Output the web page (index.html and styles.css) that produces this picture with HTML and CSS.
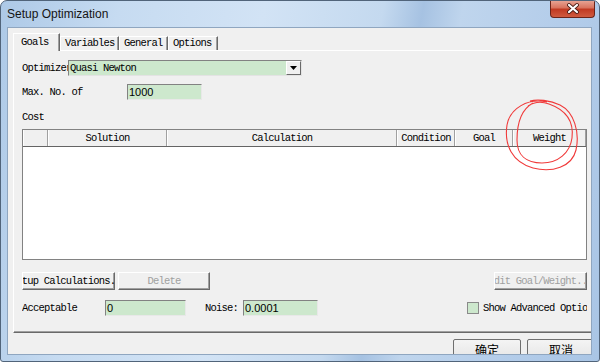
FILE: index.html
```html
<html>
<head>
  <title>Setup Optimization</title>
  <link rel="stylesheet" href="styles.css">
</head>
<body>

<div class="window">
  <div class="titlebar">
    <span class="title">Setup Optimization</span>
    <div class="close">
      <svg width="14" height="11" viewBox="0 0 14 11">
        <path d="M3 2 L11 9 M11 2 L3 9" stroke="#4a1d16" stroke-width="3.8" stroke-linecap="round"/>
        <path d="M3 2 L11 9 M11 2 L3 9" stroke="#ffffff" stroke-width="2.2" stroke-linecap="round"/>
      </svg>
    </div>
  </div>

  <div class="client">
    <div class="tabs">
      <div class="tab active w-goals">Goals</div>
      <div class="tab w-vars">Variables</div>
      <div class="tab w-gen">General</div>
      <div class="tab w-opts">Options</div>
    </div>

    <div class="pane">
      <div class="row row-opt">
        <span class="lbl w-optimizer">Optimizer</span>
        <div class="combo">
          <span class="combo-text">Quasi Newton</span>
          <span class="drop">
            <svg width="7" height="4" viewBox="0 0 7 4"><path d="M0 0 H7 L3.5 4 Z" fill="#000"/></svg>
          </span>
        </div>
      </div>

      <div class="row row-max">
        <span class="lbl w-max">Max. No. of</span>
        <div class="field w-maxval">1000</div>
      </div>

      <div class="row row-cost">
        <span class="lbl">Cost</span>
      </div>

      <div class="grid">
        <div class="grid-head">
          <div class="hcell"></div>
          <div class="hcell">Solution</div>
          <div class="hcell">Calculation</div>
          <div class="hcell">Condition</div>
          <div class="hcell">Goal</div>
          <div class="hcell">Weight</div>
        </div>
        <div class="grid-body"></div>
      </div>

      <div class="row row-btns">
        <div class="btn w-setup">Setup Calculations...</div>
        <div class="btn disabled w-delete">Delete</div>
        <div class="btn disabled w-edit push">Edit Goal/Weight...</div>
      </div>

      <div class="row row-accept">
        <span class="lbl w-accept">Acceptable</span>
        <div class="field w-acceptval">0</div>
        <span class="lbl w-noise">Noise:</span>
        <div class="field w-noiseval">0.0001</div>
        <div class="check push">
          <span class="box"></span>
          <span class="check-text">Show Advanced Options</span>
        </div>
      </div>
    </div>

    <div class="dialog-buttons">
      <div class="dbtn">确定</div>
      <div class="dbtn">取消</div>
    </div>
  </div>

  <svg class="mark" width="85" height="82" viewBox="500 95 85 82">
    <path d="M547 102 C528 98, 510 108, 507 125 C504 145, 512 162, 533 168 C552 173, 572 167, 576 150 C580 132, 574 112, 560 105 C550 100, 537 99, 530 101" fill="none" stroke="#f03a3a" stroke-width="1.1"/>
    <path d="M533 103 C522 109, 517 122, 517 140 C517 155, 526 163, 542 163 C558 163, 570 153, 572 138 C574 122, 566 110, 549 104 C541 101, 534 102, 528 106" fill="none" stroke="#f03a3a" stroke-width="1.1"/>
  </svg>
</div>

</body>
</html>
```

FILE: styles.css
```css
* { box-sizing: border-box; }
html, body { margin: 0; padding: 0; }
body {
  width: 600px; height: 362px; overflow: hidden; background: #fff;
  font-family: "Liberation Mono", "DejaVu Sans Mono", monospace;
  font-size: 10.5px; letter-spacing: -0.8px; color: #000;
}

/* window frame */
.window {
  position: relative; width: 600px; height: 362px;
  border: 1px solid #51647a; border-radius: 7px 7px 3px 3px;
  background: linear-gradient(100deg, #adc9e7 0%, #c6dbf1 18%, #d2e3f5 40%, #c4d9ef 58%, #a6c2e2 64%, #bfd5ed 70%, #b4cdea 85%, #a9c5e5 100%);
  display: flex; flex-direction: column; overflow: hidden;
}
.titlebar { height: 26px; flex: none; display: flex; align-items: flex-start; }
.title {
  font-family: "Liberation Sans", Arial, sans-serif; font-size: 12px; letter-spacing: 0;
  line-height: 14px; margin: 6px 0 0 6px; color: #151515;
}
.close {
  margin: -1px 4px 0 auto; width: 45px; height: 18px;
  border: 1px solid #6b2419; border-top: none; border-radius: 0 0 4px 4px;
  background: linear-gradient(#e9a99a 0%, #d9745f 45%, #c13a22 55%, #cf5a3f 100%);
  display: flex; align-items: center; justify-content: center;
}

.client {
  flex: none; width: 585px; height: 328px; margin-left: 6px;
  border: 1px solid #8fa6c0; background: #f0f0f0; overflow: hidden;
}

/* tabs */
.tabs { height: 22px; margin-left: 5px; display: flex; align-items: flex-end; }
.tab {
  height: 14px; line-height: 13px; padding-left: 4px; white-space: nowrap;
  border-top: 1px solid #fff; border-left: 1px solid #fff; border-right: 1px solid #696969;
  box-shadow: inset -1px 0 #a0a0a0; background: #f0f0f0;
}
.tab.active {
  height: 18px; padding: 2px 0 0 7px; margin-bottom: -1px;
  position: relative; z-index: 1;
}
.w-goals { width: 47px; }
.w-vars { width: 59px; }
.w-gen { width: 49px; }
.w-opts { width: 50px; }

.pane {
  width: 620px; height: 283px; margin-left: 5px;
  border: 1px solid #a0a0a0; border-top-color: #fff; border-left-color: #fff;
  border-bottom-color: #696969;
  box-shadow: inset -1px -1px #a0a0a0;
  padding: 9px 0 0 8px;
}

.row { display: flex; align-items: center; width: 565px; }
.push { margin-left: auto; }
.lbl { white-space: nowrap; overflow: hidden; flex: none; }
.w-optimizer { width: 46px; }
.w-max { width: 105px; }
.w-accept { width: 83px; }
.w-noise { width: 38px; margin-left: 19px; }

.row-max { margin-top: 8px; }
.row-cost { margin-top: 11px; height: 12px; line-height: 12px; }

.combo {
  width: 234px; height: 16px; display: flex; align-items: center;
  border: 1px solid; border-color: #828282 #e3e3e3 #e3e3e3 #828282;
  background: #cde8cd;
}
.combo-text { flex: 1; padding-left: 1px; }
.drop {
  width: 15px; height: 14px; display: flex; align-items: center; justify-content: center;
  border: 1px solid; border-color: #fff #696969 #696969 #fff; background: #f0f0f0;
}

.field {
  height: 16px; flex: none; padding-left: 1px; line-height: 14px;
  font-family: "Liberation Sans", Arial, sans-serif; font-size: 11px; letter-spacing: 0;
  border: 1px solid; border-color: #828282 #e8e8e8 #e8e8e8 #828282;
  background: #cde8cd;
}
.w-maxval { width: 75px; }
.w-acceptval { width: 81px; }
.w-noiseval { width: 75px; }

/* list grid */
.grid {
  width: 565px; height: 131px; margin-top: 6px;
  border: 1px solid #828282; background: #fff;
}
.grid-head {
  display: grid; grid-template-columns: 25px 119px 230px 58px 58px 1fr;
  height: 17px; border-bottom: 1px solid #646464; background: #f0f0f0;
}
.hcell {
  text-align: center; line-height: 17px; white-space: nowrap; overflow: hidden;
  border-left: 1px solid #fff; border-right: 1px solid #a0a0a0;
}

/* buttons */
.row-btns { margin-top: 12px; height: 18px; }
.btn {
  height: 18px; flex: none; display: flex; justify-content: center; align-items: center;
  overflow: hidden; white-space: nowrap;
  border: 1px solid; border-color: #fff #696969 #696969 #fff;
  box-shadow: inset -1px -1px #a0a0a0; background: #f0f0f0;
}
.btn.disabled { color: #a0a0a0; }
.w-setup { width: 93px; }
.w-delete { width: 92px; margin-left: 3px; }
.w-edit { width: 93px; }

.row-accept { margin-top: 10px; height: 15px; }
.check { width: 120px; display: flex; align-items: center; overflow: hidden; white-space: nowrap; }
.box {
  width: 12px; height: 12px; flex: none; margin-right: 4px;
  border: 1px solid #8a8a8a; background: #cde8cd;
}

/* dialog buttons */
.dialog-buttons { display: flex; margin-top: 6px; padding-left: 445px; }
.dbtn {
  width: 68px; height: 23px; flex: none; margin-right: 6px; text-align: center;
  font-family: "Noto Sans CJK SC", sans-serif; font-size: 12px; letter-spacing: 0;
  line-height: 20px; border: 1px solid #6f6f6f; border-radius: 2px;
  background: linear-gradient(#f4f4f4, #e4e4e4);
}

.mark { position: absolute; left: 499px; top: 94px; }
```
